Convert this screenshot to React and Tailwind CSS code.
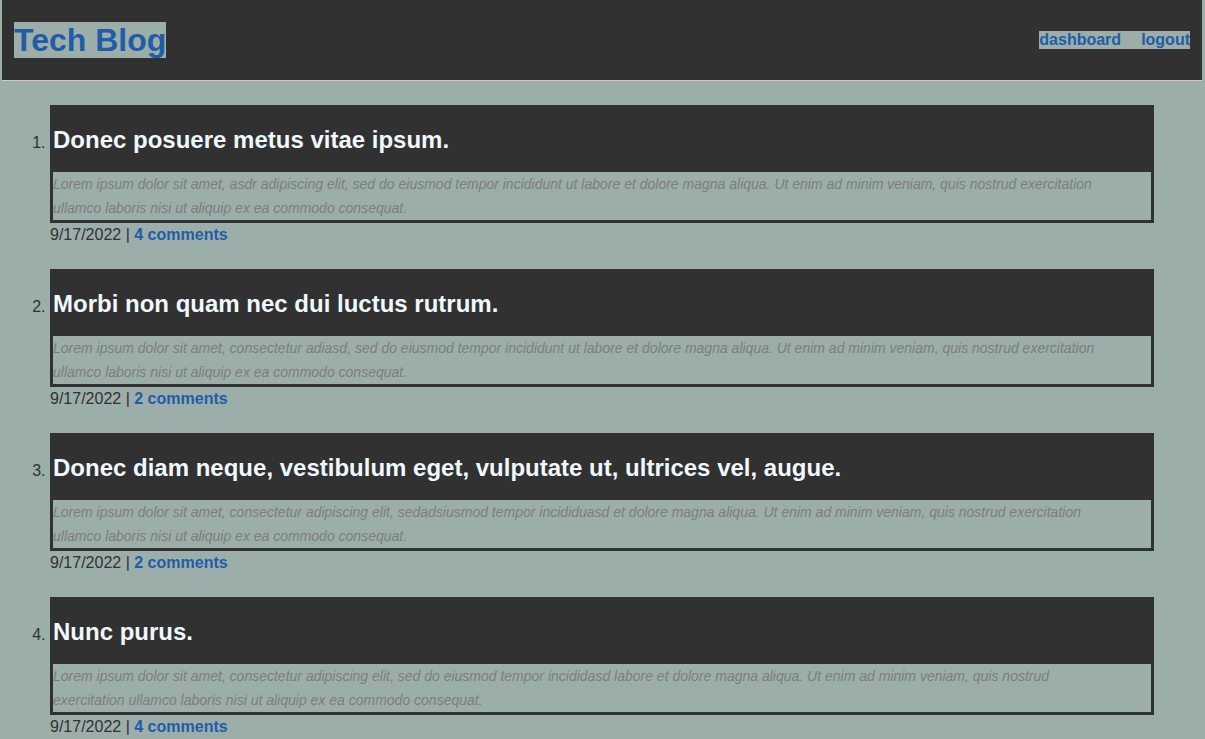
const posts = [
  {
    title: 'Donec posuere metus vitae ipsum.',
    body: 'Lorem ipsum dolor sit amet, asdr adipiscing elit, sed do eiusmod tempor incididunt ut labore et dolore magna aliqua. Ut enim ad minim veniam, quis nostrud exercitation ullamco laboris nisi ut aliquip ex ea commodo consequat.',
    date: '9/17/2022',
    comments: 4,
  },
  {
    title: 'Morbi non quam nec dui luctus rutrum.',
    body: 'Lorem ipsum dolor sit amet, consectetur adiasd, sed do eiusmod tempor incididunt ut labore et dolore magna aliqua. Ut enim ad minim veniam, quis nostrud exercitation ullamco laboris nisi ut aliquip ex ea commodo consequat.',
    date: '9/17/2022',
    comments: 2,
  },
  {
    title: 'Donec diam neque, vestibulum eget, vulputate ut, ultrices vel, augue.',
    body: 'Lorem ipsum dolor sit amet, consectetur adipiscing elit, sedadsiusmod tempor incididuasd et dolore magna aliqua. Ut enim ad minim veniam, quis nostrud exercitation ullamco laboris nisi ut aliquip ex ea commodo consequat.',
    date: '9/17/2022',
    comments: 2,
  },
  {
    title: 'Nunc purus.',
    body: 'Lorem ipsum dolor sit amet, consectetur adipiscing elit, sed do eiusmod tempor incididasd labore et dolore magna aliqua. Ut enim ad minim veniam, quis nostrud exercitation ullamco laboris nisi ut aliquip ex ea commodo consequat.',
    date: '9/17/2022',
    comments: 4,
  },
];

function Post({ post }) {
  return (
    <li>
      <article className="border-[3px] border-[#313131]">
        <h2 className="bg-[#313131] py-4 text-2xl leading-8 font-bold text-[#f0f8ff]">
          <a href="#post">{post.title}</a>
        </h2>
        <p className="pr-10 text-sm leading-6 text-[#7d7d7d] italic">{post.body}</p>
      </article>
      <div className="leading-6">
        {post.date} |{' '}
        <a href="#comments" className="font-bold text-[#235ca6]">
          {post.comments} comments
        </a>
      </div>
    </li>
  );
}

export default function App() {
  return (
    <div className="min-h-screen bg-[#9caeaa] pr-[3px] pl-[2px] font-['Liberation_Sans',Arial,sans-serif] text-base text-[#313131]">
      <header className="flex items-center justify-between border-b border-[#d3c9cb] bg-[#313131] px-3 py-5">
        <h1 className="text-[32px] leading-10 font-bold text-[#235ca6]">
          <a href="#home" className="bg-[#9caeaa]">Tech Blog</a>
        </h1>
        <nav className="flex bg-[#9caeaa] leading-[18px] font-bold text-[#235ca6]">
          <a href="#dashboard" className="pr-5">dashboard</a>
          <a href="#logout">logout</a>
        </nav>
      </header>
      <main className="px-12 pt-6">
        <ol className="flex list-decimal flex-col gap-[22px]">
          {posts.map((post) => (
            <Post key={post.title} post={post} />
          ))}
        </ol>
      </main>
    </div>
  );
}
